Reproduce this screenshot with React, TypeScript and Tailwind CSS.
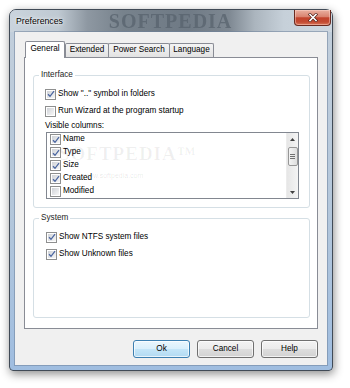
import React from "react";

function Check({ checked }: { checked: boolean }) {
  return (
    <span className="flex h-[11px] w-[11px] shrink-0 border border-[#8e8f8f] bg-white p-px">
      <span className="flex flex-1 items-center justify-center bg-[linear-gradient(135deg,#cfd2d7,#f7f7f7)]">
        {checked && (
          <svg width="8" height="8" viewBox="0 0 8 8" className="overflow-visible">
            <path d="M1 4.3 L3 6.3 L7 1.2" fill="none" stroke="#4a65a0" strokeWidth="1.25" />
          </svg>
        )}
      </span>
    </span>
  );
}

function CheckRow({ checked, label, className = "" }: { checked: boolean; label: string; className?: string }) {
  return (
    <div className={`flex h-[14px] items-center gap-[2px] ${className}`}>
      <Check checked={checked} />
      <span className="leading-none">{label}</span>
    </div>
  );
}

function ListRow({ checked, label }: { checked: boolean; label: string }) {
  return (
    <div className="flex h-[13px] shrink-0 items-center gap-[2px] pl-[3px]">
      <Check checked={checked} />
      <span className="leading-none">{label}</span>
    </div>
  );
}

function Tab({ className, children }: { className: string; children: React.ReactNode }) {
  return (
    <div
      className={`flex h-[14px] items-center justify-center rounded-t-[2px] border border-b-0 border-[#898c95] bg-[linear-gradient(to_bottom,#f4f4f4,#e2e2e2)] ${className}`}
    >
      <span className="leading-none">{children}</span>
    </div>
  );
}

function Btn({ primary, children }: { primary?: boolean; children: React.ReactNode }) {
  return (
    <div
      className={
        primary
          ? "flex h-[18px] w-[57px] items-center justify-center rounded-[3px] border border-[#3c7fb1] bg-[linear-gradient(to_bottom,#eaf6fd_0%,#d9effc_50%,#c4e5f8_51%,#b2daf2_100%)] shadow-[inset_0_0_0_1px_rgba(255,255,255,0.7)]"
          : "flex h-[18px] w-[57px] items-center justify-center rounded-[3px] border border-[#707070] bg-[linear-gradient(to_bottom,#f3f3f3_0%,#ebebeb_50%,#dddddd_51%,#d2d2d2_100%)] shadow-[inset_0_0_0_1px_rgba(255,255,255,0.7)]"
      }
    >
      <span className="leading-none">{children}</span>
    </div>
  );
}

export default function App() {
  return (
    <div className="h-[388px] w-[350px] overflow-hidden bg-white pl-[9px] pt-[9px] font-['Liberation_Sans',Arial,sans-serif] text-[8.2px] text-black">
      <div className="flex h-[362px] w-[324px] flex-col rounded-t-[7px] rounded-b-[4px] border border-[#414b57] bg-[linear-gradient(to_bottom,#c3cfdb,#b4c7db_55%,#9fbde0)] shadow-[1px_3px_10px_rgba(0,0,0,0.45)]">
        {/* Title bar */}
        <div className="flex h-[22px] items-center rounded-t-[6px] bg-[linear-gradient(to_right,#cad4dd_0%,#bfc9d2_15%,#8e98a2_24%,#77828c_35%,#6f7a85_55%,#7e8892_68%,#abb5be_76%,#c6d0d9_85%,#ced7e0_100%)] pl-[6px]">
          <span className="text-[8.7px] leading-none [text-shadow:0_0_5px_rgba(255,255,255,0.95),0_0_2px_rgba(255,255,255,0.9)]">
            Preferences
          </span>
          <span className="ml-[46px] font-['Liberation_Serif',serif] text-[20px] font-bold leading-none tracking-[1px] text-[#56616c] opacity-70 blur-[0.7px]">
            SOFTPEDIA
          </span>
          <div className="ml-auto mr-px flex h-[16px] w-[37px] items-center justify-center self-start rounded-b-[4px] border border-t-0 border-[#6a2a20] bg-[linear-gradient(to_bottom,#eab0a1_0%,#d98370_45%,#c2432d_52%,#c34b33_80%,#d9775a_100%)] shadow-[inset_0_0_0_1px_rgba(255,220,210,0.45)]">
            <svg width="10" height="9" viewBox="0 0 10 9">
              <path d="M2 1.5 L8 7.5 M8 1.5 L2 7.5" stroke="#4a1d16" strokeWidth="3" strokeLinecap="square" />
              <path d="M2 1.5 L8 7.5 M8 1.5 L2 7.5" stroke="#ffffff" strokeWidth="1.6" strokeLinecap="square" />
            </svg>
          </div>
        </div>

        {/* Client area */}
        <div className="mx-[5px] mb-[5px] flex flex-1 flex-col bg-[#f0f0f0] px-[9px] pt-[9px] shadow-[0_0_0_1px_rgba(110,130,155,0.55)]">
          {/* Tabs */}
          <div className="flex h-[16px] items-end pl-px">
            <div className="relative z-10 -mb-px flex h-[17px] w-[40px] items-center justify-center rounded-t-[2px] border border-b-0 border-[#898c95] bg-white pb-[2px]">
              <span className="leading-none">General</span>
            </div>
            <Tab className="w-[44px]">Extended</Tab>
            <Tab className="-ml-px w-[62px]">Power Search</Tab>
            <Tab className="-ml-px w-[45px]">Language</Tab>
          </div>

          {/* Panel */}
          <div className="flex h-[272px] flex-col border border-[#898c95] bg-white pl-[8px] pr-[7px] pt-[12px]">
            <fieldset className="h-[138px] rounded-[3px] border border-[#d5dfe5]">
              <legend className="ml-[5px] px-[2px] leading-[10px] text-[#1e1e1e]">Interface</legend>
              <div className="flex flex-col pl-[11px] pt-[7px]">
                <CheckRow checked label={'Show ".." symbol in folders'} />
                <CheckRow checked={false} label="Run Wizard at the program startup" className="mt-[3px]" />
                <div className="mt-[2px] flex h-[12px] items-center leading-none">Visible columns:</div>
                <div className="relative ml-px flex h-[67px] w-[253px] border border-[#828790] bg-white">
                  <div className="flex flex-1 flex-col overflow-hidden">
                    <ListRow checked label="Name" />
                    <ListRow checked label="Type" />
                    <ListRow checked label="Size" />
                    <ListRow checked label="Created" />
                    <ListRow checked={false} label="Modified" />
                  </div>
                  <div className="flex w-[12px] flex-col items-center border-l border-[#ececec] bg-[linear-gradient(to_right,#e6e6e6,#f4f4f4)]">
                    <div className="flex h-[12px] items-center justify-center">
                      <svg width="5" height="3" viewBox="0 0 5 3">
                        <path d="M0 3 L2.5 0 L5 3Z" fill="#404040" />
                      </svg>
                    </div>
                    <div className="mt-[2px] flex h-[19px] w-[10px] flex-col items-center justify-center gap-[1px] rounded-[2px] border border-[#979797] bg-[linear-gradient(to_right,#f4f4f4,#dedede)]">
                      <span className="h-px w-[5px] bg-[#707070]" />
                      <span className="h-px w-[5px] bg-[#707070]" />
                      <span className="h-px w-[5px] bg-[#707070]" />
                    </div>
                    <div className="flex-1" />
                    <div className="flex h-[12px] items-center justify-center">
                      <svg width="5" height="3" viewBox="0 0 5 3">
                        <path d="M0 0 L2.5 3 L5 0Z" fill="#404040" />
                      </svg>
                    </div>
                  </div>
                  <span className="pointer-events-none absolute left-[12px] top-[9px] font-['Liberation_Serif',serif] text-[19px] font-bold leading-[24px] tracking-[1px] text-black/[0.06]">
                    SOFTPEDIA™
                  </span>
                  <span className="pointer-events-none absolute left-[36px] top-[39px] text-[7px] leading-[8px] text-black/[0.1]">
                    www.softpedia.com
                  </span>
                </div>
              </div>
            </fieldset>

            <fieldset className="mt-[5px] h-[105px] rounded-[3px] border border-[#d5dfe5]">
              <legend className="ml-[5px] px-[2px] leading-[10px] text-[#1e1e1e]">System</legend>
              <div className="flex flex-col pl-[12px] pt-[7px]">
                <CheckRow checked label="Show NTFS system files" />
                <CheckRow checked label="Show Unknown files" className="mt-[3px]" />
              </div>
            </fieldset>
          </div>

          {/* Buttons */}
          <div className="mt-[11px] flex justify-end gap-[7px]">
            <Btn primary>Ok</Btn>
            <Btn>Cancel</Btn>
            <Btn>Help</Btn>
          </div>
        </div>
      </div>
    </div>
  );
}
